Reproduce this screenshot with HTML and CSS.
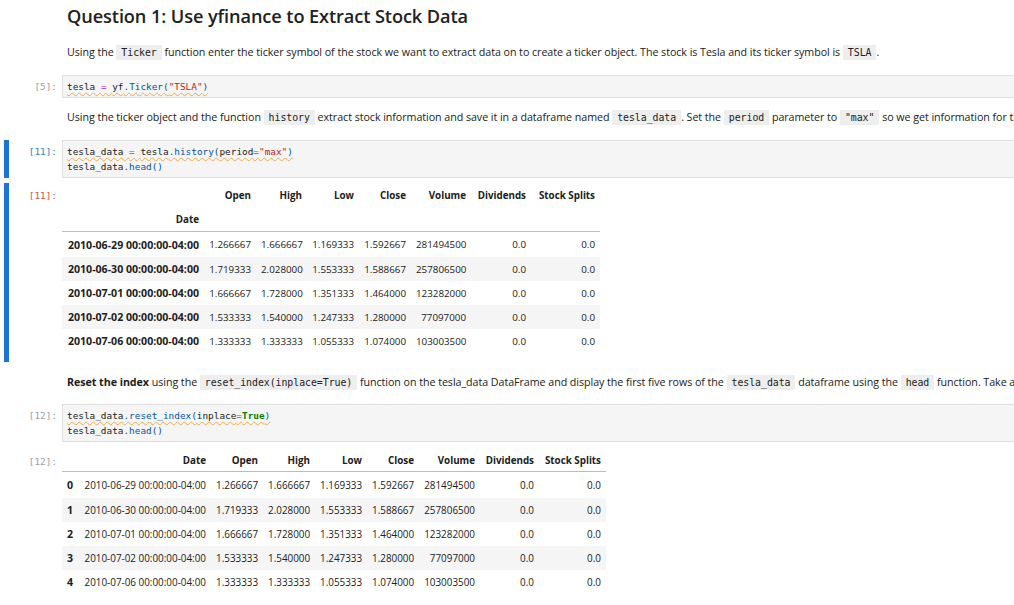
FILE: index.html
```html
<!DOCTYPE html>
<html>
<head>
<meta charset="utf-8">
<link rel="stylesheet" href="styles.css">
</head>
<body>
<div class="notebook">
  <div class="cell md title-cell">
    <div class="collapser"></div>
    <div class="prompt"></div>
    <div class="md-body"><h2>Question 1: Use yfinance to Extract Stock Data</h2></div>
  </div>

  <div class="cell md p1">
    <div class="collapser"></div>
    <div class="prompt"></div>
    <div class="md-body"><p>Using the <code>Ticker</code> function enter the ticker symbol of the stock we want to extract data on to create a ticker object. The stock is Tesla and its ticker symbol is <code>TSLA</code>.</p></div>
  </div>

  <div class="cell code c5">
    <div class="collapser"></div>
    <div class="prompt">[5]:</div>
    <div class="editor"><div class="line"><span class="squig"><span class="v">tesla</span> <span class="o">=</span> <span class="v">yf</span><span class="p">.Ticker(</span><span class="s">"TSLA"</span><span class="p">)</span></span></div></div>
  </div>

  <div class="cell md p2">
    <div class="collapser"></div>
    <div class="prompt"></div>
    <div class="md-body"><p>Using the ticker object and the function <code>history</code> extract stock information and save it in a dataframe named <code>tesla_data</code>. Set the <code>period</code> parameter to <code>"max"</code> so we get information for the maximum amount of time.</p></div>
  </div>

  <div class="cell code c11 active">
    <div class="collapser"></div>
    <div class="prompt blue">[11]:</div>
    <div class="editor"><div class="line"><span class="squig"><span class="v">tesla_data</span> <span class="o">=</span> <span class="v">tesla</span><span class="p">.history(</span><span class="v">period</span><span class="o">=</span><span class="s">"max"</span><span class="p">)</span></span></div><div class="line"><span class="v">tesla_data</span><span class="p">.head()</span></div></div>
  </div>

  <div class="cell output out11 active">
    <div class="collapser"></div>
    <div class="prompt red">[11]:</div>
    <div class="out-body">
      <table class="df df1">
        <colgroup>
          <col class="w142"><col class="w52"><col class="w51"><col class="w52"><col class="w52"><col class="w60"><col class="w60"><col class="w69">
        </colgroup>
        <thead>
          <tr><th></th><th>Open</th><th>High</th><th>Low</th><th>Close</th><th>Volume</th><th>Dividends</th><th>Stock Splits</th></tr>
          <tr class="namerow"><th>Date</th><th></th><th></th><th></th><th></th><th></th><th></th><th></th></tr>
        </thead>
        <tbody>
          <tr><th>2010-06-29 00:00:00-04:00</th><td>1.266667</td><td>1.666667</td><td>1.169333</td><td>1.592667</td><td>281494500</td><td>0.0</td><td>0.0</td></tr>
          <tr><th>2010-06-30 00:00:00-04:00</th><td>1.719333</td><td>2.028000</td><td>1.553333</td><td>1.588667</td><td>257806500</td><td>0.0</td><td>0.0</td></tr>
          <tr><th>2010-07-01 00:00:00-04:00</th><td>1.666667</td><td>1.728000</td><td>1.351333</td><td>1.464000</td><td>123282000</td><td>0.0</td><td>0.0</td></tr>
          <tr><th>2010-07-02 00:00:00-04:00</th><td>1.533333</td><td>1.540000</td><td>1.247333</td><td>1.280000</td><td>77097000</td><td>0.0</td><td>0.0</td></tr>
          <tr><th>2010-07-06 00:00:00-04:00</th><td>1.333333</td><td>1.333333</td><td>1.055333</td><td>1.074000</td><td>103003500</td><td>0.0</td><td>0.0</td></tr>
        </tbody>
      </table>
    </div>
  </div>

  <div class="cell md p3">
    <div class="collapser"></div>
    <div class="prompt"></div>
    <div class="md-body"><p><strong>Reset the index</strong> using the <code>reset_index(inplace=True)</code> function on the tesla_data DataFrame and display the first five rows of the <code>tesla_data</code> dataframe using the <code>head</code> function. Take a screenshot of the results and code from the beginning of Question 1 to the results below.</p></div>
  </div>

  <div class="cell code c12">
    <div class="collapser"></div>
    <div class="prompt">[12]:</div>
    <div class="editor"><div class="line"><span class="squig"><span class="v">tesla_data</span><span class="p">.reset_index(</span><span class="v">inplace</span><span class="o">=</span><span class="k">True</span><span class="p">)</span></span></div><div class="line"><span class="v">tesla_data</span><span class="p">.head()</span></div></div>
  </div>

  <div class="cell output out12">
    <div class="collapser"></div>
    <div class="prompt">[12]:</div>
    <div class="out-body">
      <table class="df df2">
        <colgroup>
          <col class="w14"><col class="w135"><col class="w52"><col class="w52"><col class="w52"><col class="w52"><col class="w61"><col class="w59"><col class="w67">
        </colgroup>
        <thead>
          <tr><th></th><th>Date</th><th>Open</th><th>High</th><th>Low</th><th>Close</th><th>Volume</th><th>Dividends</th><th>Stock Splits</th></tr>
        </thead>
        <tbody>
          <tr><th>0</th><td>2010-06-29 00:00:00-04:00</td><td>1.266667</td><td>1.666667</td><td>1.169333</td><td>1.592667</td><td>281494500</td><td>0.0</td><td>0.0</td></tr>
          <tr><th>1</th><td>2010-06-30 00:00:00-04:00</td><td>1.719333</td><td>2.028000</td><td>1.553333</td><td>1.588667</td><td>257806500</td><td>0.0</td><td>0.0</td></tr>
          <tr><th>2</th><td>2010-07-01 00:00:00-04:00</td><td>1.666667</td><td>1.728000</td><td>1.351333</td><td>1.464000</td><td>123282000</td><td>0.0</td><td>0.0</td></tr>
          <tr><th>3</th><td>2010-07-02 00:00:00-04:00</td><td>1.533333</td><td>1.540000</td><td>1.247333</td><td>1.280000</td><td>77097000</td><td>0.0</td><td>0.0</td></tr>
          <tr><th>4</th><td>2010-07-06 00:00:00-04:00</td><td>1.333333</td><td>1.333333</td><td>1.055333</td><td>1.074000</td><td>103003500</td><td>0.0</td><td>0.0</td></tr>
        </tbody>
      </table>
    </div>
  </div>
</div>
</body>
</html>
```
FILE: styles.css
```css
html, body {
  margin: 0;
  padding: 0;
  background: #fff;
  overflow: hidden;
}
body {
  width: 1014px;
  height: 605px;
  font-family: "Open Sans", "Noto Sans", sans-serif;
  color: #212121;
}
.notebook {
  width: 1200px;
}
.cell {
  display: flex;
  align-items: stretch;
}
.collapser {
  width: 5px;
  margin-left: 4px;
  flex: none;
}
.active .collapser {
  background: #1976d2;
}
.prompt {
  width: 48px;
  flex: none;
  padding-right: 5px;
  text-align: right;
  font-family: "DejaVu Sans Mono", monospace;
  font-size: 9.4px;
  color: #9e9e9e;
  line-height: 15px;
  padding-top: 4px;
}
.prompt.blue { color: #307fc1; }
.prompt.red { color: #bf5b3d; }

.md-body {
  padding-left: 5px;
  flex: 1;
  white-space: nowrap;
}
h2 {
  margin: 0;
  font-size: 18.2px;
  font-weight: 600;
  line-height: 24px;
  letter-spacing: -0.1px;
}
p {
  margin: 0;
  font-size: 10.7px;
  line-height: 16px;
  letter-spacing: -0.05px;
}
code {
  font-family: "DejaVu Sans Mono", monospace;
  font-size: 9.9px;
  background: #eeeeee;
  padding: 2px 5px;
  color: #212121;
}
strong { font-weight: 700; }

.title-cell { margin-top: 4px; }
.p1 { margin-top: 16px; }
.c5 { margin-top: 14px; }
.p2 { margin-top: 11px; }
.c11 { margin-top: 14px; }
.out11 { margin-top: 5px; }
.p3 { margin-top: 12px; }
.c12 { margin-top: 13px; }
.out12 { margin-top: 7px; }

.editor {
  flex: 1;
  background: #f5f5f5;
  border: 1px solid #e0e0e0;
  padding: 3px 4px;
  font-family: "DejaVu Sans Mono", monospace;
  font-size: 9.4px;
  line-height: 15px;
}
.line { white-space: pre; height: 15px; }
.v { color: #212121; }
.o { color: #aa22ff; }
.s { color: #ba2121; }
.p { color: #0055aa; }
.k { color: #008000; font-weight: bold; }
.squig {
  text-decoration: underline wavy #f0a848;
  text-decoration-thickness: 1px;
  text-underline-offset: 2px;
}

.output .prompt { padding-top: 5px; }
.out-body {
  flex: 1;
  padding-bottom: 9px;
}
.df {
  border-collapse: collapse;
  table-layout: fixed;
  color: #212121;
}
.df1 { width: 538px; }
.df2 { width: 544px; }
.df th, .df td {
  padding: 0 5px;
  height: 24px;
  text-align: right;
  white-space: nowrap;
  vertical-align: middle;
  overflow: visible;
}
.df th { font-weight: 700; font-size: 10.6px; }
.df thead th { font-size: 9.8px; }
.df td { font-weight: 400; font-size: 9.8px; }
.df2 td { font-size: 9.9px; }
.df thead tr:last-child th {
  border-bottom: 1px solid #bdbdbd;
}
.df thead th { height: 24px; }
.df2 thead th { height: 22px; }
.df tbody tr:nth-child(even) { background: #f5f5f5; }
.df1 tbody tr:first-child th, .df1 tbody tr:first-child td { height: 25px; }
.df2 tbody tr:first-child th, .df2 tbody tr:first-child td { height: 26px; }

.w14 { width: 14px; }
.w51 { width: 51px; }
.w52 { width: 52px; }
.w59 { width: 59px; }
.w60 { width: 60px; }
.w61 { width: 61px; }
.w67 { width: 67px; }
.w69 { width: 69px; }
.w135 { width: 135px; }
.w142 { width: 142px; }
```
